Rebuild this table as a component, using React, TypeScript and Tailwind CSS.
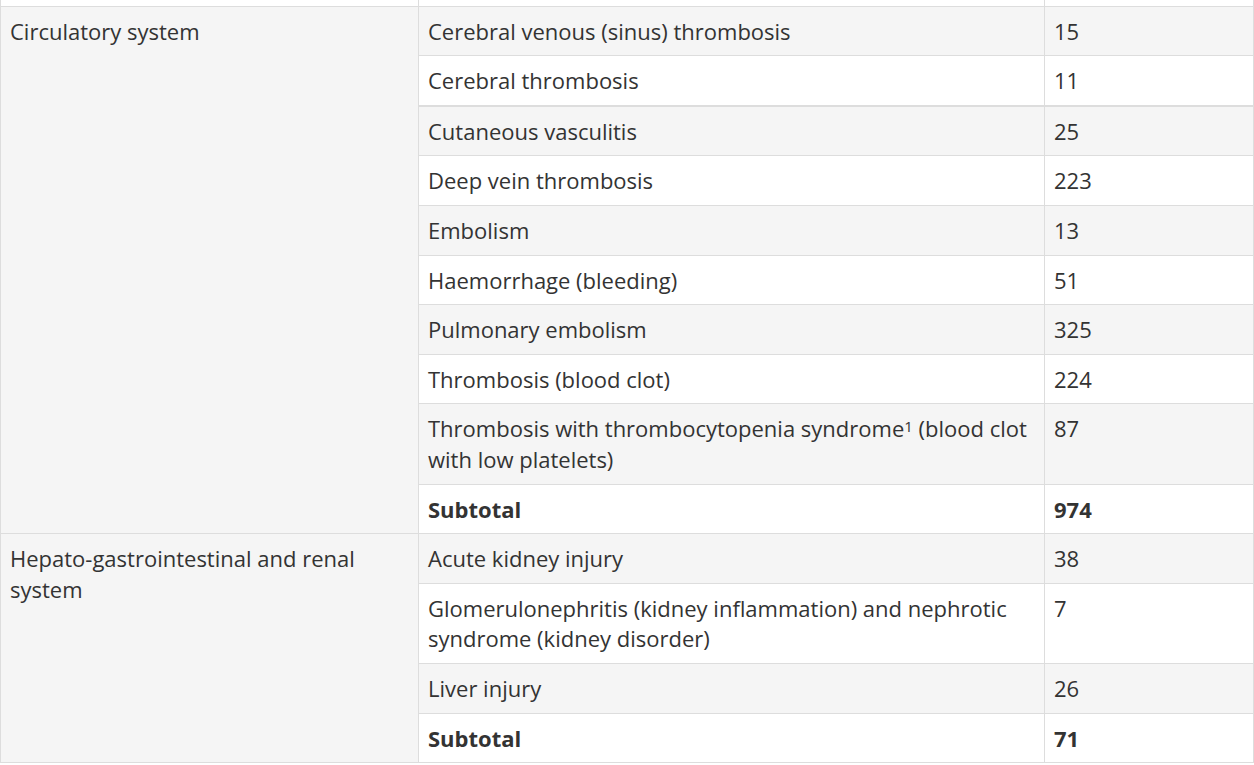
type Row = { name: React.ReactNode; count: string; bold?: boolean };

const groups: { system: string; rows: Row[] }[] = [
  {
    system: 'Circulatory system',
    rows: [
      { name: 'Cerebral venous (sinus) thrombosis', count: '15' },
      { name: 'Cerebral thrombosis', count: '11' },
      { name: 'Cutaneous vasculitis', count: '25' },
      { name: 'Deep vein thrombosis', count: '223' },
      { name: 'Embolism', count: '13' },
      { name: 'Haemorrhage (bleeding)', count: '51' },
      { name: 'Pulmonary embolism', count: '325' },
      { name: 'Thrombosis (blood clot)', count: '224' },
      {
        name: (
          <>
            Thrombosis with thrombocytopenia syndrome<sup className="text-[15px] relative -top-[5px]">1</sup> (blood clot
            with low platelets)
          </>
        ),
        count: '87',
      },
      { name: 'Subtotal', count: '974', bold: true },
    ],
  },
  {
    system: 'Hepato-gastrointestinal and renal system',
    rows: [
      { name: 'Acute kidney injury', count: '38' },
      {
        name: 'Glomerulonephritis (kidney inflammation) and nephrotic syndrome (kidney disorder)',
        count: '7',
      },
      { name: 'Liver injury', count: '26' },
      { name: 'Subtotal', count: '71', bold: true },
    ],
  },
];

const cell = 'border border-[#dddddd] align-top px-[9px] pt-[9px] pb-[9px] leading-[30.6px]';

export default function App() {
  return (
    <div className="min-h-screen bg-white text-[#333333] text-[22px] font-['Open_Sans',sans-serif] overflow-hidden">
      <div className="-mt-[44px]">
        <table className="w-[1253px] border-collapse table-fixed">
          <colgroup>
            <col className="w-[418px]" />
            <col className="w-[626px]" />
            <col className="w-[209px]" />
          </colgroup>
          <tbody>
            <tr className="bg-white">
              <td className={cell}>&nbsp;</td>
              <td className={cell}>&nbsp;</td>
              <td className={cell}>&nbsp;</td>
            </tr>
            {groups.map((g, gi) =>
              g.rows.map((r, i) => {
                // the source table has a slightly heavier rule below the second row
                const edge = gi === 0 && i === 1 ? 'border-b-2' : '';
                return (
                  <tr key={g.system + i} className={i % 2 === 0 ? 'bg-[#f5f5f5]' : 'bg-white'}>
                    {i === 0 && (
                      <td rowSpan={g.rows.length} className={`${cell} bg-[#f5f5f5]`}>
                        {g.system}
                      </td>
                    )}
                    <td className={`${cell} ${edge} ${r.bold ? 'font-bold' : ''}`}>{r.name}</td>
                    <td className={`${cell} ${edge} ${r.bold ? 'font-bold' : ''}`}>{r.count}</td>
                  </tr>
                );
              })
            )}
          </tbody>
        </table>
      </div>
    </div>
  );
}
